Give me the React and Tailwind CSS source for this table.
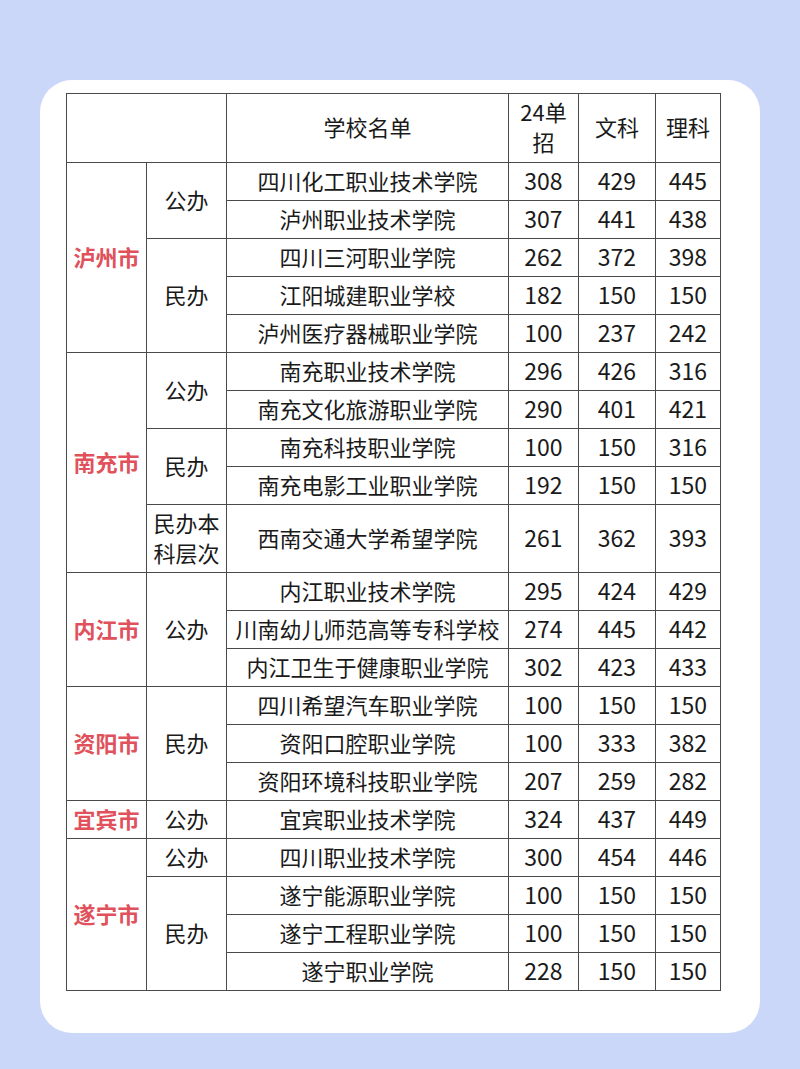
import React from 'react';

const rows = [
  { city: '泸州市', citySpan: 5, type: '公办', typeSpan: 2, name: '四川化工职业技术学院', a: 308, b: 429, c: 445 },
  { name: '泸州职业技术学院', a: 307, b: 441, c: 438 },
  { type: '民办', typeSpan: 3, name: '四川三河职业学院', a: 262, b: 372, c: 398 },
  { name: '江阳城建职业学校', a: 182, b: 150, c: 150 },
  { name: '泸州医疗器械职业学院', a: 100, b: 237, c: 242 },
  { city: '南充市', citySpan: 5, type: '公办', typeSpan: 2, name: '南充职业技术学院', a: 296, b: 426, c: 316 },
  { name: '南充文化旅游职业学院', a: 290, b: 401, c: 421 },
  { type: '民办', typeSpan: 2, name: '南充科技职业学院', a: 100, b: 150, c: 316 },
  { name: '南充电影工业职业学院', a: 192, b: 150, c: 150 },
  { type: '民办本科层次', typeSpan: 1, name: '西南交通大学希望学院', a: 261, b: 362, c: 393, tall: true },
  { city: '内江市', citySpan: 3, type: '公办', typeSpan: 3, name: '内江职业技术学院', a: 295, b: 424, c: 429 },
  { name: '川南幼儿师范高等专科学校', a: 274, b: 445, c: 442 },
  { name: '内江卫生于健康职业学院', a: 302, b: 423, c: 433 },
  { city: '资阳市', citySpan: 3, type: '民办', typeSpan: 3, name: '四川希望汽车职业学院', a: 100, b: 150, c: 150 },
  { name: '资阳口腔职业学院', a: 100, b: 333, c: 382 },
  { name: '资阳环境科技职业学院', a: 207, b: 259, c: 282 },
  { city: '宜宾市', citySpan: 1, type: '公办', typeSpan: 1, name: '宜宾职业技术学院', a: 324, b: 437, c: 449 },
  { city: '遂宁市', citySpan: 4, type: '公办', typeSpan: 1, name: '四川职业技术学院', a: 300, b: 454, c: 446 },
  { type: '民办', typeSpan: 3, name: '遂宁能源职业学院', a: 100, b: 150, c: 150 },
  { name: '遂宁工程职业学院', a: 100, b: 150, c: 150 },
  { name: '遂宁职业学院', a: 228, b: 150, c: 150 },
];

const cell = 'border border-[#4a4a4a] text-center align-middle px-0 pt-0 pb-[4px]';
const num = `${cell} text-[23px]`;

export default function App() {
  return (
    <div
      className="w-[800px] h-[1069px] bg-[#cad7f9] pt-[80px] pl-[40px]"
      style={{ fontFamily: '"Noto Sans CJK SC", "Noto Sans", sans-serif' }}
    >
      <div className="w-[720px] h-[953px] bg-white rounded-[32px] pt-[13px] pl-[26px]">
        <table className="table-fixed border-collapse w-[654px] text-[22px] text-[#1a1a1a] leading-[30px]">
          <colgroup>
            <col className="w-[80px]" />
            <col className="w-[80px]" />
            <col className="w-[282px]" />
            <col className="w-[70px]" />
            <col className="w-[77px]" />
            <col className="w-[65px]" />
          </colgroup>
          <thead>
            <tr className="h-[69px]">
              <th className={cell} colSpan={2}></th>
              <th className={`${cell} font-normal`}>学校名单</th>
              <th className={`${cell} font-normal`}>
                24单
                <br />
                招
              </th>
              <th className={`${cell} font-normal`}>文科</th>
              <th className={`${cell} font-normal`}>理科</th>
            </tr>
          </thead>
          <tbody>
            {rows.map((r, i) => (
              <tr key={i} className={r.tall ? 'h-[68px]' : 'h-[38px]'}>
                {r.city && (
                  <td className={`${cell} font-bold text-[#e0515c]`} rowSpan={r.citySpan}>
                    {r.city}
                  </td>
                )}
                {r.type && (
                  <td className={`${cell} px-[6px]`} rowSpan={r.typeSpan}>
                    {r.type}
                  </td>
                )}
                <td className={`${cell} whitespace-nowrap`}>{r.name}</td>
                <td className={num}>{r.a}</td>
                <td className={num}>{r.b}</td>
                <td className={num}>{r.c}</td>
              </tr>
            ))}
          </tbody>
        </table>
      </div>
    </div>
  );
}
